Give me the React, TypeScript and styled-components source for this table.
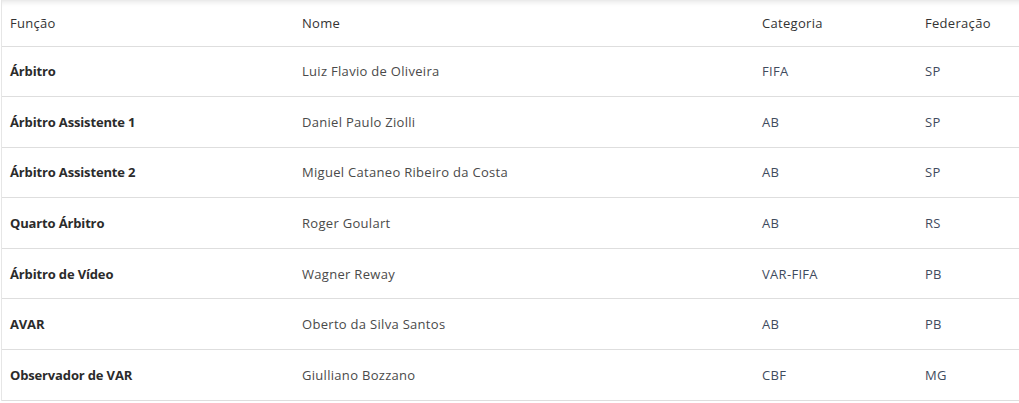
import React from 'react';
import styled, { createGlobalStyle } from 'styled-components';

const GlobalStyle = createGlobalStyle`
  html, body {
    margin: 0;
    padding: 0;
    background: #fff;
  }
  body {
    font-family: 'Open Sans', 'Noto Sans', sans-serif;
  }
`;

const Wrapper = styled.div`
  margin-left: 1px;
  width: 1030px;
  border-left: 1px solid #e6e6e6;
  box-shadow: inset 0 7px 6px -6px rgba(0, 0, 0, 0.14);
`;

const Table = styled.table`
  width: 100%;
  table-layout: fixed;
  border-collapse: collapse;
  font-size: 13px;
  letter-spacing: 0.3px;
`;

const HeadCell = styled.th<{ width: number }>`
  box-sizing: border-box;
  width: ${p => p.width}px;
  height: 46px;
  padding: 0 8px;
  text-align: left;
  font-weight: 400;
  color: #333;
  border-bottom: 1px solid #dedede;
`;

const Row = styled.tr`
  border-bottom: 1px solid #dedede;
`;

const Cell = styled.td<{ tone?: 'strong' | 'name' | 'code' }>`
  box-sizing: border-box;
  height: 50.6px;
  padding: 0 8px;
  color: ${p =>
    p.tone === 'strong' ? '#2b2b2b' : p.tone === 'code' ? '#3f4b5e' : '#4a4a4a'};
  font-weight: ${p => (p.tone === 'strong' ? 700 : 400)};
  letter-spacing: ${p => (p.tone === 'strong' ? '-0.15px' : '0.3px')};
`;

interface Referee {
  role: string;
  name: string;
  category: string;
  federation: string;
}

const referees: Referee[] = [
  { role: 'Árbitro', name: 'Luiz Flavio de Oliveira', category: 'FIFA', federation: 'SP' },
  { role: 'Árbitro Assistente 1', name: 'Daniel Paulo Ziolli', category: 'AB', federation: 'SP' },
  { role: 'Árbitro Assistente 2', name: 'Miguel Cataneo Ribeiro da Costa', category: 'AB', federation: 'SP' },
  { role: 'Quarto Árbitro', name: 'Roger Goulart', category: 'AB', federation: 'RS' },
  { role: 'Árbitro de Vídeo', name: 'Wagner Reway', category: 'VAR-FIFA', federation: 'PB' },
  { role: 'AVAR', name: 'Oberto da Silva Santos', category: 'AB', federation: 'PB' },
  { role: 'Observador de VAR', name: 'Giulliano Bozzano', category: 'CBF', federation: 'MG' }
];

const App = () => (
  <>
    <GlobalStyle />
    <Wrapper>
      <Table>
        <thead>
          <tr>
            <HeadCell width={292}>Função</HeadCell>
            <HeadCell width={460}>Nome</HeadCell>
            <HeadCell width={163}>Categoria</HeadCell>
            <HeadCell width={115}>Federação</HeadCell>
          </tr>
        </thead>
        <tbody>
          {referees.map(r => (
            <Row key={r.role}>
              <Cell tone="strong">{r.role}</Cell>
              <Cell tone="name">{r.name}</Cell>
              <Cell tone="code">{r.category}</Cell>
              <Cell tone="code">{r.federation}</Cell>
            </Row>
          ))}
        </tbody>
      </Table>
    </Wrapper>
  </>
);

export default App;
